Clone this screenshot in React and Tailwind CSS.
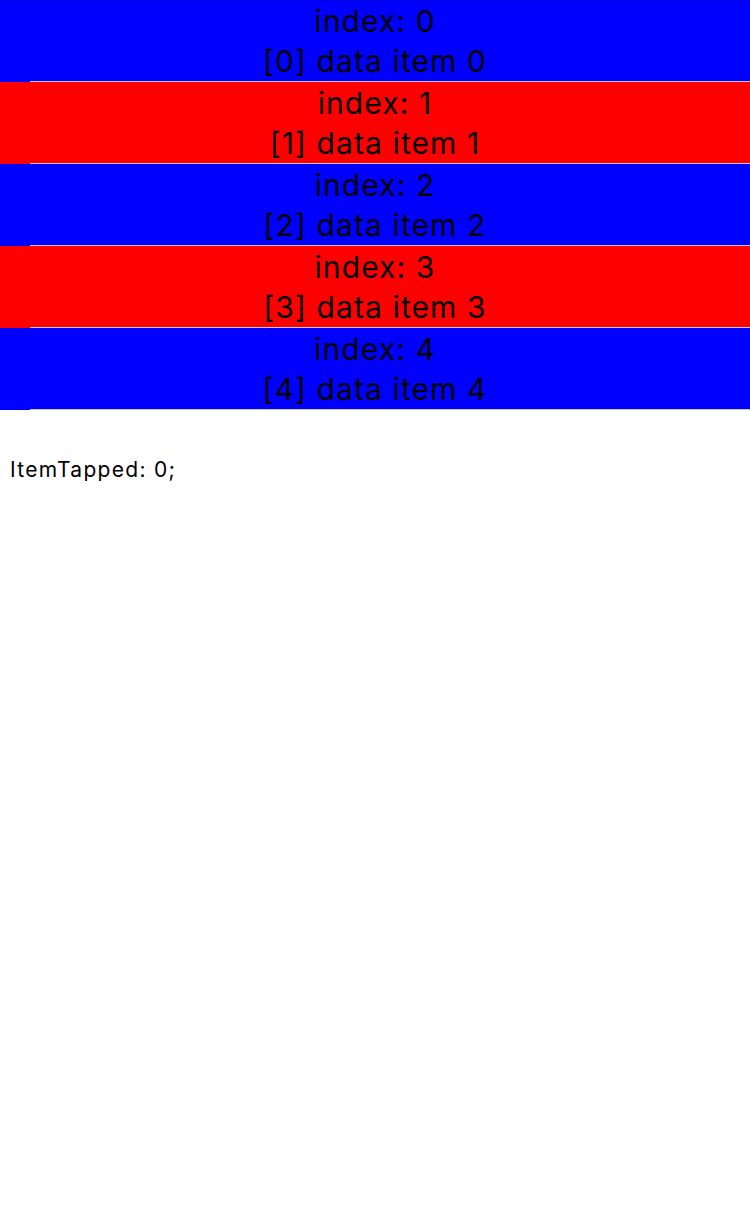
const items = [0, 1, 2, 3, 4];

function App() {
  return (
    <div
      className="min-h-[1206px] bg-white"
      style={{ fontFamily: "Inter, 'Liberation Sans', sans-serif" }}
    >
      <ul>
        {items.map((i) => (
          <li key={i} className={i % 2 === 0 ? "bg-[#0000ff]" : "bg-[#ff0000]"}>
            <div
              className={
                "h-[81px] flex flex-col items-center justify-center text-[30px] leading-[40px] tracking-[1.1px] text-black " +
                (i === 0 ? "border-t border-[#0000e0]" : "")
              }
            >
              <span>index: {i}</span>
              <span>
                [{i}] data item {i}
              </span>
            </div>
            <div className="h-px ml-[30px] bg-[#c8c7cc]" />
          </li>
        ))}
      </ul>
      <p className="mt-[48px] px-[10px] text-[21px] leading-[24px] tracking-[1.3px] text-black">
        ItemTapped: 0;
      </p>
    </div>
  );
}

export default App;
